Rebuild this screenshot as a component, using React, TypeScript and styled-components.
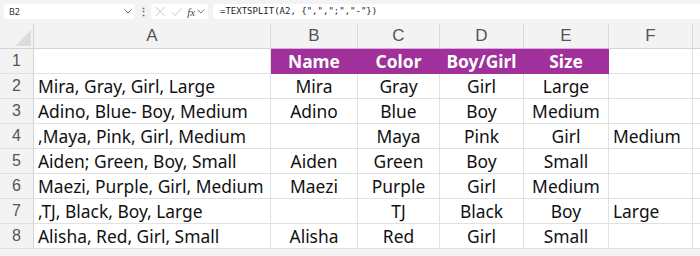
import React from "react";
import styled, { createGlobalStyle } from "styled-components";

const GlobalStyle = createGlobalStyle`
  html, body {
    margin: 0;
    padding: 0;
    background: #ffffff;
    overflow: hidden;
  }
`;

const columns = ["A", "B", "C", "D", "E", "F", ""];
const widths = [237, 87, 82, 84, 85, 84];

const header = ["", "Name", "Color", "Boy/Girl", "Size", "", ""];

const rows: string[][] = [
  ["Mira, Gray, Girl, Large", "Mira", "Gray", "Girl", "Large", "", ""],
  ["Adino, Blue- Boy, Medium", "Adino", "Blue", "Boy", "Medium", "", ""],
  [",Maya, Pink, Girl, Medium", "", "Maya", "Pink", "Girl", "Medium", ""],
  ["Aiden; Green, Boy, Small", "Aiden", "Green", "Boy", "Small", "", ""],
  ["Maezi, Purple, Girl, Medium", "Maezi", "Purple", "Girl", "Medium", "", ""],
  [",TJ, Black, Boy, Large", "", "TJ", "Black", "Boy", "Large", ""],
  ["Alisha, Red, Girl, Small", "Alisha", "Red", "Girl", "Small", "", ""],
];

function XIcon() {
  return (
    <svg width="11" height="11" viewBox="0 0 11 11">
      <path d="M1 1L10 10M10 1L1 10" stroke="#c4c4c4" strokeWidth="1" fill="none" />
    </svg>
  );
}

function CheckIcon() {
  return (
    <svg width="12" height="10" viewBox="0 0 12 10">
      <path d="M1 5.5L4.2 8.7L11 1.3" stroke="#c4c4c4" strokeWidth="1" fill="none" />
    </svg>
  );
}

function Chevron() {
  return (
    <svg width="8" height="5" viewBox="0 0 8 5">
      <path d="M0.5 0.5L4 4L7.5 0.5" stroke="#666" strokeWidth="1" fill="none" />
    </svg>
  );
}

function App() {
  return (
    <>
      <GlobalStyle />
      <Page>
        <Toolbar>
          <NameBox>
            <span>B2</span>
            <Chevron />
          </NameBox>
          <Dots>⋮</Dots>
          <EditBox>
            <XIcon />
            <CheckIcon />
            <Fx>fx</Fx>
            <Chevron />
          </EditBox>
          <FormulaInput>=TEXTSPLIT(A2, {'{'}",",";","-"{'}'})</FormulaInput>
        </Toolbar>
        <Grid>
          <Corner>
            <Triangle />
          </Corner>
          {columns.map((c, i) => (
            <ColHeader key={c + i} $marked={i >= 1 && i <= 4}>
              {c}
            </ColHeader>
          ))}
          <RowHeader>1</RowHeader>
          {header.map((h, i) => (
            <HeadCell key={i} $filled={i >= 1 && i <= 4}>
              {h}
            </HeadCell>
          ))}
          {rows.map((r, ri) => (
            <React.Fragment key={ri}>
              <RowHeader>{ri + 2}</RowHeader>
              {r.map((v, ci) => (
                <Cell key={ci} $align={ci === 0 || ci >= 5 ? "left" : "center"}>
                  {v}
                </Cell>
              ))}
            </React.Fragment>
          ))}
        </Grid>
      </Page>
    </>
  );
}

const Page = styled.div`
  width: 700px;
  height: 256px;
  background: #f3f3f3;
  font-family: "Noto Sans", "Open Sans", sans-serif;
  overflow: hidden;
`;

const Toolbar = styled.div`
  height: 24px;
  display: flex;
  align-items: flex-start;
  padding: 4px 0 0 4px;
  box-sizing: border-box;
`;

const NameBox = styled.div`
  width: 131px;
  height: 15px;
  background: #ffffff;
  border-radius: 3px;
  box-sizing: border-box;
  display: flex;
  align-items: center;
  justify-content: space-between;
  padding: 0 3px 0 5px;
  font-family: "Noto Sans", sans-serif;
  font-size: 9px;
  color: #333;
`;

const Dots = styled.div`
  width: 16px;
  height: 15px;
  line-height: 15px;
  text-align: center;
  font-size: 11px;
  font-weight: bold;
  color: #666;
`;

const EditBox = styled.div`
  width: 57px;
  height: 15px;
  background: #ffffff;
  border-radius: 3px;
  display: flex;
  align-items: center;
  gap: 5px;
  padding: 0 3px 0 4px;
  box-sizing: border-box;
  margin-right: 5px;
`;

const Fx = styled.span`
  font-family: "Liberation Serif", serif;
  font-style: italic;
  font-size: 11px;
  color: #444;
  margin-right: -3px;
`;

const FormulaInput = styled.div`
  flex: 1;
  height: 15px;
  background: #ffffff;
  border-radius: 3px 0 0 3px;
  padding-left: 7px;
  box-sizing: border-box;
  font-family: "DejaVu Sans Mono", monospace;
  font-size: 9px;
  line-height: 15px;
  color: #222;
  white-space: pre;
`;

const Grid = styled.div`
  display: grid;
  grid-template-columns: 34px ${widths.map((w) => `${w}px`).join(" ")} 1fr;
  grid-template-rows: 25px repeat(8, 25px) 1fr;
  background: #ffffff;
`;

const Corner = styled.div`
  background: #f3f3f3;
  border-right: 1px solid #d4d4d4;
  border-bottom: 1px solid #d4d4d4;
  box-sizing: border-box;
  display: flex;
  align-items: flex-end;
  justify-content: flex-end;
  padding: 0 2px 2px 0;
`;

const Triangle = styled.div`
  width: 0;
  height: 0;
  border-left: 16px solid transparent;
  border-bottom: 16px solid #dcdcdc;
`;

const ColHeader = styled.div<{ $marked: boolean }>`
  background: #f3f3f3;
  border-right: 1px solid #dadada;
  border-bottom: 1px solid ${(p) => (p.$marked ? "#e4a6e0" : "#d4d4d4")};
  box-sizing: border-box;
  display: flex;
  align-items: center;
  justify-content: center;
  font-family: "Liberation Sans", sans-serif;
  font-size: 17px;
  color: #555;
`;

const RowHeader = styled.div`
  background: #f3f3f3;
  border-right: 1px solid #d4d4d4;
  border-bottom: 1px solid #e1e1e1;
  box-sizing: border-box;
  display: flex;
  align-items: center;
  justify-content: center;
  font-family: "Liberation Sans", sans-serif;
  font-size: 16px;
  color: #555;
`;

const Cell = styled.div<{ $align: "left" | "center" }>`
  border-right: 1px solid #e1e1e1;
  border-bottom: 1px solid #e1e1e1;
  box-sizing: border-box;
  display: flex;
  align-items: center;
  justify-content: ${(p) => (p.$align === "left" ? "flex-start" : "center")};
  padding: 0 4px;
  font-size: 17.4px;
  color: #111;
  white-space: nowrap;
  overflow: visible;
`;

const HeadCell = styled(Cell).attrs({ $align: "center" as const })<{ $filled: boolean }>`
  background: ${(p) => (p.$filled ? "#a0309a" : "#ffffff")};
  border-right-color: ${(p) => (p.$filled ? "#a0309a" : "#e1e1e1")};
  border-bottom-color: ${(p) => (p.$filled ? "#a0309a" : "#e1e1e1")};
  color: #ffffff;
  font-weight: 700;
`;

export default App;
